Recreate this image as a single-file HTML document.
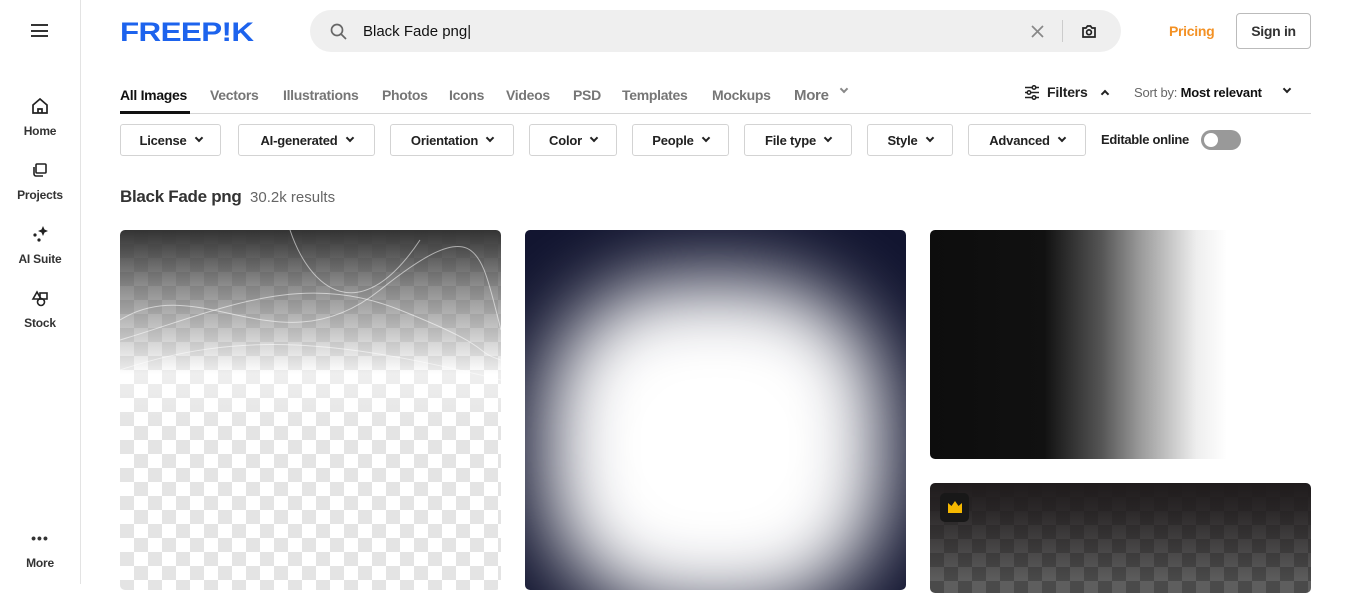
<!DOCTYPE html>
<html><head><meta charset="utf-8"><style>
*{box-sizing:border-box;margin:0;padding:0}
body{width:1350px;height:584px;overflow:hidden;background:#fff;font-family:"Liberation Sans",sans-serif;color:#212121;position:relative}
.side{position:absolute;left:0;top:0;width:81px;height:584px;border-right:1px solid #e3e3e3}
.side .it{position:absolute;left:0;width:80px;text-align:center;font-size:12px;font-weight:bold;color:#333;letter-spacing:-0.2px}
.side svg{display:block;margin:0 auto 9px}
.abs{position:absolute}
.logo{left:120px;top:17px;font-size:27px;font-weight:900;color:#1d63ed;transform:scaleX(1.16);transform-origin:left;letter-spacing:-0.5px}
.search{left:310px;top:10px;width:811px;height:42px;border-radius:21px;background:#efefef}
.tabs{left:120px;top:87px;font-size:14px;color:#767676;font-weight:bold;letter-spacing:-0.3px}
.tabs span{position:absolute;white-space:nowrap}
.line{left:120px;top:113px;width:1191px;height:1px;background:#d6d6d6}
.chip{position:absolute;top:124px;height:32px;border:1px solid #d3d3d3;border-radius:3px;font-size:13px;font-weight:bold;display:flex;align-items:center;justify-content:center;gap:9px;color:#212121;letter-spacing:-0.2px}
.chev{width:6px;height:6px;border-right:2px solid #222;border-bottom:2px solid #222;transform:rotate(45deg);margin-top:-4px}
.img{position:absolute;border-radius:5px;overflow:hidden}
</style></head><body>
<div class="side">
 <div class="abs" style="left:31px;top:24px;width:17px;height:13px;border-top:2px solid #333;border-bottom:2px solid #333"><div style="margin-top:3.5px;height:2px;background:#333"></div></div>
 <div class="it" style="top:97px"><svg width="18" height="18" viewBox="0 0 18 18" fill="none" stroke="#222" stroke-width="1.7"><path d="M2 8L9 2l7 6v8H2z"/><path d="M7 16v-4h4v4"/></svg>Home</div>
 <div class="it" style="top:161px"><svg width="18" height="18" viewBox="0 0 18 18" fill="none" stroke="#222" stroke-width="1.6"><rect x="5" y="3" width="10" height="9" rx="1"/><path d="M3 6v7a2 2 0 0 0 2 2h7"/></svg>Projects</div>
 <div class="it" style="top:225px"><svg width="18" height="18" viewBox="0 0 18 18" fill="#222"><path d="M12 1l1.5 3.5L17 6l-3.5 1.5L12 11l-1.5-3.5L7 6l3.5-1.5z"/><circle cx="4" cy="10" r="1.6"/><circle cx="8" cy="15" r="1.6"/></svg>AI Suite</div>
 <div class="it" style="top:289px"><svg width="18" height="18" viewBox="0 0 18 18" fill="none" stroke="#222" stroke-width="1.6"><path d="M2 10L6 3l4 7z"/><rect x="9" y="4" width="7" height="6"/><circle cx="10" cy="13" r="3.5"/></svg>Stock</div>
 <div class="it" style="top:531px;font-size:14px;line-height:14px;letter-spacing:1px">•••</div>
 <div class="it" style="top:556px">More</div>
</div>
<div class="abs logo">FREEP!K</div>
<div class="abs search">
 <svg class="abs" style="left:20px;top:13px" width="17" height="17" viewBox="0 0 17 17" fill="none" stroke="#666" stroke-width="1.7"><circle cx="7" cy="7" r="5.5"/><path d="M11 11l5 5"/></svg>
 <div class="abs" style="left:53px;top:13px;font-size:15px;color:#111">Black Fade png|</div>
 <svg class="abs" style="left:721px;top:15px" width="13" height="13" viewBox="0 0 13 13" stroke="#888" stroke-width="1.7"><path d="M1 1l11 11M12 1L1 12"/></svg>
 <div class="abs" style="left:752px;top:10px;width:1px;height:22px;background:#ccc"></div>
 <svg class="abs" style="left:771px;top:13px" width="16" height="16" viewBox="0 0 16 16" fill="none" stroke="#222" stroke-width="1.7"><path d="M2 5h3l1.5-2h3L11 5h3v9H2z"/><circle cx="8" cy="9.3" r="2.4"/></svg>
</div>
<div class="abs" style="left:1169px;top:23px;font-size:14px;font-weight:bold;color:#f39124;letter-spacing:-0.3px">Pricing</div>
<div class="abs" style="left:1236px;top:13px;width:75px;height:36px;border:1px solid #bbb;border-radius:4px;font-size:14px;font-weight:bold;color:#333;text-align:center;line-height:34px;letter-spacing:-0.3px">Sign in</div>
<div class="abs tabs">
 <span style="left:0;color:#111">All Images</span><span style="left:90px">Vectors</span><span style="left:163px">Illustrations</span><span style="left:262px">Photos</span><span style="left:329px">Icons</span><span style="left:386px">Videos</span><span style="left:453px">PSD</span><span style="left:502px">Templates</span><span style="left:592px">Mockups</span><span style="left:674px;font-size:15px">More</span>
</div>
<div class="abs" style="left:841px;top:90px"><div class="chev" style="border-color:#888"></div></div>
<div class="abs line"></div>
<div class="abs" style="left:120px;top:111px;width:70px;height:3px;background:#111"></div>
<svg class="abs" style="left:1024px;top:85px" width="16" height="15" viewBox="0 0 16 15" stroke="#222" stroke-width="1.5" fill="#fff"><path d="M1 2.5h14M1 7.5h14M1 12.5h14"/><circle cx="10" cy="2.5" r="1.8"/><circle cx="5" cy="7.5" r="1.8"/><circle cx="10" cy="12.5" r="1.8"/></svg>
<div class="abs" style="left:1047px;top:84px;font-size:14px;font-weight:bold;letter-spacing:-0.2px">Filters</div>
<div class="abs" style="left:1102px;top:91px"><div class="chev" style="transform:rotate(225deg);margin-top:0"></div></div>
<div class="abs" style="left:1134px;top:85px;font-size:13px;color:#666;letter-spacing:-0.2px">Sort by: <b style="color:#111">Most relevant</b></div>
<div class="abs" style="left:1284px;top:90px"><div class="chev"></div></div>
<div class="chip" style="left:120px;width:101px">License <div class="chev"></div></div>
<div class="chip" style="left:238px;width:137px">AI-generated <div class="chev"></div></div>
<div class="chip" style="left:390px;width:124px">Orientation <div class="chev"></div></div>
<div class="chip" style="left:529px;width:88px">Color <div class="chev"></div></div>
<div class="chip" style="left:632px;width:97px">People <div class="chev"></div></div>
<div class="chip" style="left:744px;width:108px">File type <div class="chev"></div></div>
<div class="chip" style="left:867px;width:86px">Style <div class="chev"></div></div>
<div class="chip" style="left:968px;width:118px">Advanced <div class="chev"></div></div>
<div class="abs" style="left:1101px;top:132px;font-size:13px;font-weight:bold;letter-spacing:-0.3px">Editable online</div>
<div class="abs" style="left:1201px;top:130px;width:40px;height:20px;border-radius:10px;background:#999"><div style="margin:3px;width:14px;height:14px;border-radius:50%;background:#fff"></div></div>
<div class="abs" style="left:120px;top:187px;font-size:17px;font-weight:bold;color:#333;letter-spacing:-0.3px">Black Fade png <span style="font-size:15px;font-weight:normal;color:#666;letter-spacing:0">&nbsp;30.2k results</span></div>
<div class="img" style="left:120px;top:230px;width:381px;height:360px;background:linear-gradient(#333 0%,rgba(60,60,60,.6) 15%,rgba(255,255,255,.4) 40%,rgba(255,255,255,0) 55%),repeating-conic-gradient(#e4e4e4 0 25%,#fff 0 50%) 0 0/28px 28px">
 <svg width="381" height="200" style="position:absolute;left:0;top:0" fill="none" stroke="rgba(255,255,255,.55)" stroke-width="1"><path d="M0 90C80 40 160 140 260 60S360 20 381 100"/><path d="M0 110C100 80 180 40 280 80S350 120 381 130"/><path d="M170 0C190 60 240 100 300 10"/><path d="M0 140C120 100 220 110 381 150"/></svg>
</div>
<div class="img" style="left:525px;top:230px;width:381px;height:360px;background:#121530"><div style="position:absolute;left:20px;top:50px;width:340px;height:330px;border-radius:40%;background:#fff;filter:blur(40px)"></div></div>
<div class="img" style="left:930px;top:230px;width:381px;height:229px;background:linear-gradient(90deg,#0d0d0d 0%,#111 30%,#555 45%,#999 55%,#eee 70%,#fff 78%)"></div>
<div class="img" style="left:930px;top:483px;width:381px;height:110px;background:linear-gradient(#1f1b1c 0%,rgba(31,27,28,.8) 25%,rgba(31,27,28,0) 90%),repeating-conic-gradient(#4a4a4a 0 25%,#5e5e5e 0 50%) 0 0/28px 28px">
 <div style="position:absolute;left:10px;top:10px;width:29px;height:29px;border-radius:5px;background:#181818"></div>
 <svg style="position:absolute;left:18px;top:18px" width="14" height="12" viewBox="0 0 14 12" fill="#f5b800"><path d="M0 2l3.5 3L7 0l3.5 5L14 2v10H0z"/></svg>
</div>
</body></html>
